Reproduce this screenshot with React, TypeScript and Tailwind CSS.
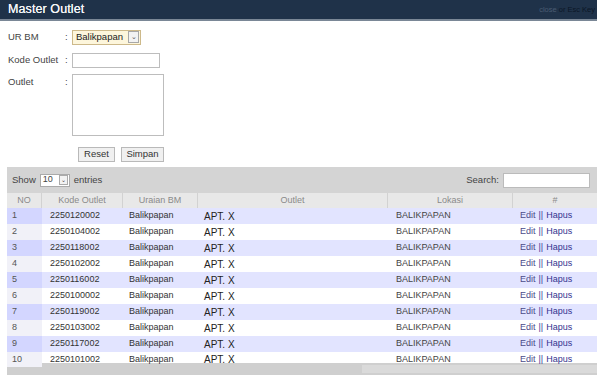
import React from "react";

const rows = [
  ["1", "2250120002"],
  ["2", "2250104002"],
  ["3", "2250118002"],
  ["4", "2250102002"],
  ["5", "2250116002"],
  ["6", "2250100002"],
  ["7", "2250119002"],
  ["8", "2250103002"],
  ["9", "2250117002"],
  ["10", "2250101002"],
];

const cols = "grid grid-cols-[35px_81px_75px_190px_125px_1fr]";

export default function App() {
  return (
    <div
      className="w-[597px] h-[375px] overflow-hidden bg-white text-[#333]"
      style={{ fontFamily: '"Liberation Sans", Arial, sans-serif' }}
    >
      {/* Title bar */}
      <div className="h-[21px] bg-[#1f3249] border-b-2 border-[#7a8796] flex items-center justify-between pl-[8px] pr-[2px]">
        <span className="text-[#f4f6f8] text-[12.5px] tracking-[0.1px] [text-shadow:0_0_0.2px_#fff]">Master Outlet</span>
        <span className="text-[7.5px] text-[#0b1626]">
          <span className="text-[#4a5c72]">close</span> or Esc Key
        </span>
      </div>

      {/* Form */}
      <div className="pl-[8px] pt-[8px] text-[9.5px] text-[#444]">
        <div className="flex items-center h-[16px]">
          <span className="w-[57px]">UR BM</span>
          <span className="w-[6px]">:</span>
          <div className="ml-[1px] h-[15px] w-[69px] border border-[#cdb98a] bg-[#fdf6dc] flex items-center justify-between pl-[3px] pr-[1px] text-[9.5px] text-[#222]">
            <span>Balikpapan</span>
            <span className="w-[11px] h-[12px] border border-[#a7a7a7] bg-[#f2f2f2] flex items-center justify-center text-[7px] text-[#555]">
              ⌄
            </span>
          </div>
        </div>
        <div className="flex items-center h-[16px] mt-[7px]">
          <span className="w-[57px]">Kode Outlet</span>
          <span className="w-[6px]">:</span>
          <div className="ml-[1px] h-[15px] w-[88px] border border-[#bdbdbd] bg-white" />
        </div>
        <div className="flex items-start mt-[6px]">
          <span className="w-[57px] pt-[1px]">Outlet</span>
          <span className="w-[6px] pt-[1px]">:</span>
          <div className="ml-[1px] h-[62px] w-[92px] border border-[#bdbdbd] bg-white" />
        </div>
        <div className="flex gap-[6px] ml-[70px] mt-[11px]">
          <div className="h-[15px] w-[37px] border border-[#b9b9b9] bg-[#f0f0f0] flex items-center justify-center text-[9.5px] text-[#333]">
            Reset
          </div>
          <div className="h-[15px] w-[43px] border border-[#b9b9b9] bg-[#f0f0f0] flex items-center justify-center text-[9.5px] text-[#333]">
            Simpan
          </div>
        </div>
      </div>

      {/* Table panel */}
      <div className="ml-[7px] mt-[5px]">
        <div className="h-[26px] bg-[#d4d4d4] flex items-center justify-between pl-[5px] pr-[7px] text-[9.5px] text-[#444]">
          <div className="flex items-center gap-[4px]">
            <span>Show</span>
            <div className="h-[13px] w-[30px] border border-[#aaa] bg-white flex items-center justify-between pl-[2px] pr-[1px] text-[9px]">
              <span>10</span>
              <span className="w-[9px] h-[10px] border border-[#aaa] bg-[#f2f2f2] flex items-center justify-center text-[6px]">⌄</span>
            </div>
            <span>entries</span>
          </div>
          <div className="flex items-center gap-[4px]">
            <span>Search:</span>
            <div className="h-[15px] w-[87px] border border-[#bbb] bg-white" />
          </div>
        </div>

        {/* Header */}
        <div className={`${cols} h-[15px] bg-[#e8e8e8] text-[9px] text-[#8a8a8a]`}>
          {["NO", "Kode Outlet", "Uraian BM", "Outlet", "Lokasi", "#"].map((h, i) => (
            <div
              key={h}
              className={`flex items-center justify-center ${i < 5 ? "border-r border-[#d2d2d2]" : ""}`}
            >
              {h}
            </div>
          ))}
        </div>

        {/* Rows */}
        {rows.map(([no, kode], i) => {
          const odd = i % 2 === 0;
          const last = i === rows.length - 1;
          return (
            <div
              key={no}
              className={`${cols} ${last ? "h-[11px]" : "h-[16px]"} text-[9px] ${odd ? "bg-[#e2e4ff]" : "bg-white"}`}
            >
              <div className={`flex items-center pl-[5px] text-[#555] ${odd ? "bg-[#d3d6ff]" : "bg-[#f1f1f8]"}`}>{no}</div>
              <div className="flex items-center pl-[8px] text-[#333]">{kode}</div>
              <div className="flex items-center pl-[6px] text-[#333]">Balikpapan</div>
              <div className="flex items-center pl-[6px] text-[10px] text-[#222]">
                APT. X
              </div>
              <div className="flex items-center pl-[8px] text-[9px] text-[#444]">BALIKPAPAN</div>
              <div className="flex items-center pl-[7px] text-[9px]">
                <span className="text-[#4b4b8a]">Edit</span>
                <span className="mx-[3px] text-[#3d3d9a]">||</span>
                <span className="text-[#33338f]">Hapus</span>
              </div>
            </div>
          );
        })}

        {/* Footer */}
        <div className="h-[12px] bg-[#cfcfcf] flex items-start">
          <div className="ml-[355px] mt-[2px] h-[8px] w-[235px] bg-[#dadada]" />
        </div>
      </div>
    </div>
  );
}
